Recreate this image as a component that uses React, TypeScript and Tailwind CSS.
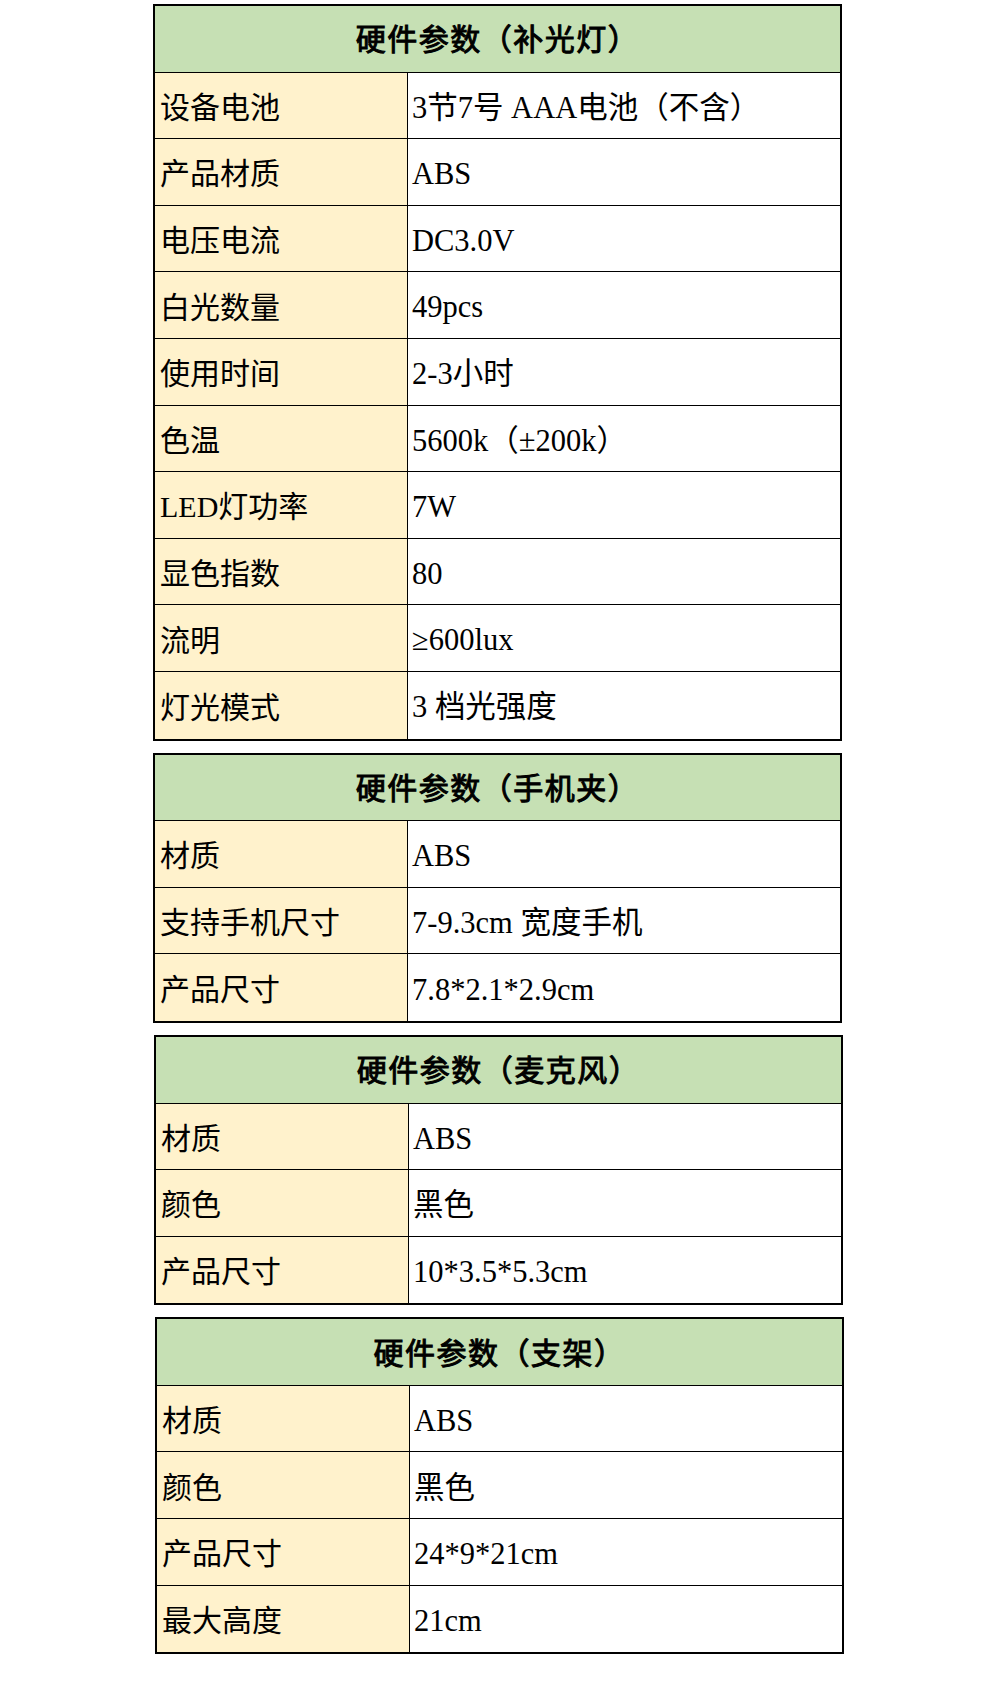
import React from "react";

type Spec = { title: string; rows: [string, string][]; shift: string };

const tables: Spec[] = [
  {
    title: "硬件参数（补光灯）",
    shift: "ml-0",
    rows: [
      ["设备电池", "3节7号 AAA电池（不含）"],
      ["产品材质", "ABS"],
      ["电压电流", "DC3.0V"],
      ["白光数量", "49pcs"],
      ["使用时间", "2-3小时"],
      ["色温", "5600k（±200k）"],
      ["LED灯功率", "7W"],
      ["显色指数", "80"],
      ["流明", "≥600lux"],
      ["灯光模式", "3 档光强度"],
    ],
  },
  {
    title: "硬件参数（手机夹）",
    shift: "ml-0",
    rows: [
      ["材质", "ABS"],
      ["支持手机尺寸", "7-9.3cm 宽度手机"],
      ["产品尺寸", "7.8*2.1*2.9cm"],
    ],
  },
  {
    title: "硬件参数（麦克风）",
    shift: "ml-[1px]",
    rows: [
      ["材质", "ABS"],
      ["颜色", "黑色"],
      ["产品尺寸", "10*3.5*5.3cm"],
    ],
  },
  {
    title: "硬件参数（支架）",
    shift: "ml-[2px]",
    rows: [
      ["材质", "ABS"],
      ["颜色", "黑色"],
      ["产品尺寸", "24*9*21cm"],
      ["最大高度", "21cm"],
    ],
  },
];

const SpecTable = ({ spec }: { spec: Spec }) => (
  <div className={`w-[689px] border-2 border-black ${spec.shift}`}>
    <div className="h-[66.6px] flex items-center justify-center pt-[3px] bg-[#c6e0b4] border-b border-black tracking-[1.5px] [-webkit-text-stroke:1px_black]">
      {spec.title}
    </div>
    {spec.rows.map(([k, v], i) => (
      <div
        key={k}
        className={`grid grid-cols-[253px_1fr] h-[66.6px] ${i < spec.rows.length - 1 ? "border-b border-black" : ""}`}
      >
        <div className="flex items-center pl-[5px] pt-[5px] bg-[#fff2cc] border-r border-black">{k}</div>
        <div className="flex items-center pl-[4px] pt-[5px] bg-white text-[30.5px] whitespace-pre">{v}</div>
      </div>
    ))}
  </div>
);

export default function App() {
  return (
    <div
      className="w-[1000px] h-[1704px] bg-white text-black text-[30px] leading-none pl-[153px] pt-[4px] flex flex-col gap-[12px]"
      style={{ fontFamily: '"Liberation Serif", "Noto Sans CJK SC", serif' }}
    >
      {tables.map((t) => (
        <SpecTable key={t.title} spec={t} />
      ))}
    </div>
  );
}
